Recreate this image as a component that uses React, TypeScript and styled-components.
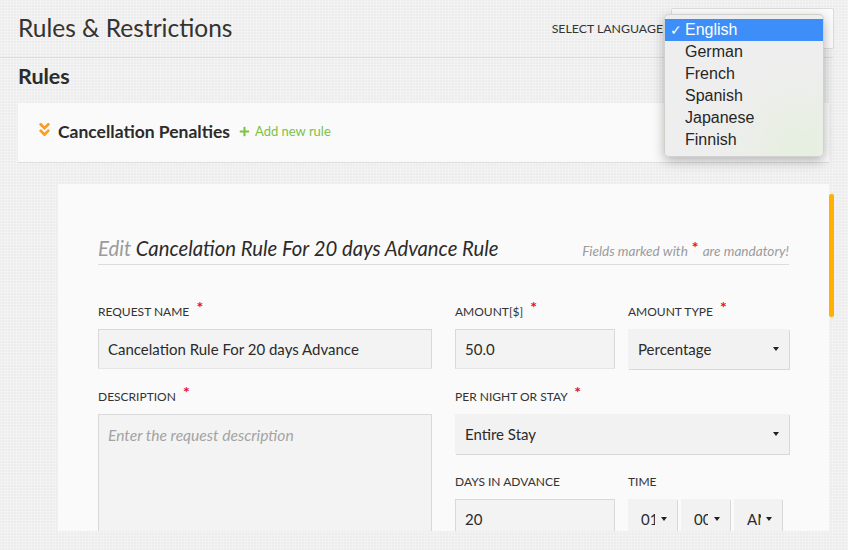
import React from 'react';
import styled, { createGlobalStyle } from 'styled-components';
import { FaAngleDoubleDown, FaPlus } from 'react-icons/fa';

const GlobalStyle = createGlobalStyle`
  html, body {
    margin: 0;
    padding: 0;
  }
  body {
    font-family: Lato, "Open Sans", sans-serif;
    color: #333;
    background-color: #efefef;
    background-image:
      radial-gradient(rgba(255, 255, 255, 0.45) 0.8px, transparent 1.1px),
      radial-gradient(rgba(0, 0, 0, 0.02) 0.8px, transparent 1.1px);
    background-size: 3px 3px;
    background-position: 0 0, 1.5px 1.5px;
  }
`;

const Page = styled.div`
  width: 848px;
  height: 550px;
  overflow: hidden;
`;

const Header = styled.header`
  height: 57px;
  margin-right: 15px;
  padding-left: 18px;
  display: flex;
  align-items: center;
  justify-content: space-between;
  border-bottom: 1px solid #dcdcdc;
`;

const Title = styled.h1`
  margin: 0 0 3px;
  font-size: 24.5px;
  font-weight: 400;
  color: #333;
`;

const LanguagePicker = styled.div`
  position: relative;
  display: flex;
  align-items: center;
  align-self: flex-start;
  margin-top: 8px;
  margin-right: -1px;
`;

const LanguageLabel = styled.span`
  font-size: 12.3px;
  text-transform: uppercase;
  color: #333;
  margin-right: 8px;
  margin-top: -1px;
`;

const LanguageBox = styled.div`
  width: 161px;
  height: 39px;
  background: #fbfbfb;
  border: 1px solid #dcdcdc;
  border-radius: 2px;
`;

const Menu = styled.ul`
  position: absolute;
  top: 6px;
  right: 10px;
  width: 160px;
  margin: 0;
  padding: 4px 0 5px;
  list-style: none;
  box-sizing: border-box;
  border-radius: 5px;
  border: 1px solid rgba(0, 0, 0, 0.12);
  background: radial-gradient(circle at 85% 95%, #e6efdf 0, #eeeeee 45%);
  box-shadow: 0 4px 12px rgba(0, 0, 0, 0.28);
  font-family: "Liberation Sans", Arial, sans-serif;
  font-size: 16px;
  z-index: 2;
`;

const MenuItem = styled.li<{ $active?: boolean }>`
  position: relative;
  height: 22px;
  line-height: 22px;
  padding-left: 20px;
  color: ${(p) => (p.$active ? '#fff' : '#262626')};
  background: ${(p) => (p.$active ? '#3d8ef8' : 'transparent')};
`;

const Check = styled.span`
  position: absolute;
  left: 5px;
  top: 0;
  font-size: 14px;
`;

const Content = styled.main`
  padding: 0 19px 0 18px;
`;

const SectionTitle = styled.h2`
  margin: 0;
  height: 45px;
  line-height: 36px;
  font-size: 21.5px;
  font-weight: 700;
  color: #2b2b2b;
`;

const RuleCard = styled.div`
  padding: 0 0 3px 18px;
  box-sizing: border-box;
  height: 60px;
  display: flex;
  align-items: center;
  background: #fafafa;
  border-bottom: 1px solid #dddddd;
`;

const Chevron = styled(FaAngleDoubleDown)`
  color: #ff9a1a;
  font-size: 17px;
  margin-right: 5px;
  margin-top: -3px;
`;

const CardTitle = styled.span`
  font-size: 17.5px;
  font-weight: 700;
  color: #2b2b2b;
  margin-right: 9px;
`;

const AddLink = styled.a`
  display: flex;
  align-items: center;
  gap: 5px;
  font-size: 13px;
  color: #7cc243;
  text-decoration: none;
  cursor: pointer;
`;

const ScrollArea = styled.div`
  position: relative;
  height: 347px;
  margin: 21px -5px 0 40px;
  overflow: hidden;
`;

const Thumb = styled.div`
  position: absolute;
  right: 0;
  top: 10px;
  width: 5px;
  height: 123px;
  border-radius: 2px;
  background: #ffb000;
`;

const Panel = styled.section`
  width: 771px;
  height: 100%;
  padding: 52px 40px 0;
  box-sizing: border-box;
  background: #fafafa;
`;

const EditHeading = styled.div`
  display: flex;
  align-items: baseline;
  justify-content: space-between;
  padding-bottom: 4px;
  border-bottom: 1px solid #dcdcdc;
`;

const EditTitle = styled.h3`
  margin: 0;
  font-size: 20.3px;
  font-weight: 400;
  font-style: italic;
  color: #2b2b2b;
`;

const Muted = styled.span`
  color: #9b9b9b;
`;

const Note = styled.span`
  font-size: 13.6px;
  font-style: italic;
  color: #9b9b9b;
`;

const Star = styled.span`
  color: #e8101c;
  font-style: normal;
  font-weight: 700;
  font-size: 16px;
  position: relative;
  top: -3px;
  margin: 0 4px 0 4px;
  line-height: 0;
`;

const FormGrid = styled.div`
  display: grid;
  grid-template-columns: 334px 334px;
  column-gap: 23px;
  margin-top: 38px;
`;

const Column = styled.div`
  display: flex;
  flex-direction: column;
  gap: 19px;
`;

const Pair = styled.div`
  display: grid;
  grid-template-columns: 160px 161px;
  column-gap: 13px;
`;

const Field = styled.div`
  display: flex;
  flex-direction: column;
`;

const Label = styled.label`
  height: 26px;
  font-size: 12px;
  text-transform: uppercase;
  color: #333;
  line-height: 18px;
`;

const Input = styled.div<{ $tall?: boolean; $placeholder?: boolean }>`
  height: ${(p) => (p.$tall ? '140px' : '40px')};
  box-sizing: border-box;
  padding: ${(p) => (p.$tall ? '11px 9px' : '0 9px')};
  display: flex;
  align-items: ${(p) => (p.$tall ? 'flex-start' : 'center')};
  background: #f3f3f3;
  border: 1px solid #d9d9d9;
  border-bottom-color: #e6e6e6;
  font-size: ${(p) => (p.$placeholder ? '15.6px' : '15px')};
  font-style: ${(p) => (p.$placeholder ? 'italic' : 'normal')};
  color: ${(p) => (p.$placeholder ? '#a3a3a3' : '#2b2b2b')};
`;

const Select = styled.div<{ $small?: boolean }>`
  height: 40px;
  box-sizing: border-box;
  padding: 0 10px 0 ${(p) => (p.$small ? '13px' : '10px')};
  display: flex;
  align-items: center;
  justify-content: space-between;
  background: #f2f2f2;
  box-shadow: 1px 1px 0 #d8d8d8;
  font-size: 15px;
  color: #2b2b2b;
`;

const Clip = styled.span`
  display: block;
  width: 14px;
  overflow: hidden;
  white-space: nowrap;
`;

const Caret = styled.span`
  flex-shrink: 0;
  width: 0;
  height: 0;
  border-left: 3.5px solid transparent;
  border-right: 3.5px solid transparent;
  border-top: 4px solid #222;
`;

const TimeRow = styled.div`
  display: grid;
  grid-template-columns: 49px 49px 48px;
  column-gap: 4px;
`;

const languages = ['English', 'German', 'French', 'Spanish', 'Japanese', 'Finnish'];

const Req = () => <Star>*</Star>;

export default function App() {
  return (
    <Page>
      <GlobalStyle />
      <Header>
        <Title>Rules &amp; Restrictions</Title>
        <LanguagePicker>
          <LanguageLabel>Select Language</LanguageLabel>
          <LanguageBox />
          <Menu>
            {languages.map((l, i) => (
              <MenuItem key={l} $active={i === 0}>
                {i === 0 && <Check>✓</Check>}
                {l}
              </MenuItem>
            ))}
          </Menu>
        </LanguagePicker>
      </Header>
      <Content>
        <SectionTitle>Rules</SectionTitle>
        <RuleCard>
          <Chevron />
          <CardTitle>Cancellation Penalties</CardTitle>
          <AddLink>
            <FaPlus size={11} />
            Add new rule
          </AddLink>
        </RuleCard>
        <ScrollArea>
          <Panel>
            <EditHeading>
              <EditTitle>
                <Muted>Edit</Muted> Cancelation Rule For 20 days Advance Rule
              </EditTitle>
              <Note>
                Fields marked with<Star>*</Star>are mandatory!
              </Note>
            </EditHeading>
            <FormGrid>
              <Column>
                <Field>
                  <Label>
                    Request Name <Req />
                  </Label>
                  <Input>Cancelation Rule For 20 days Advance</Input>
                </Field>
                <Field>
                  <Label>
                    Description <Req />
                  </Label>
                  <Input $tall $placeholder>
                    Enter the request description
                  </Input>
                </Field>
              </Column>
              <Column>
                <Pair>
                  <Field>
                    <Label>
                      Amount[$] <Req />
                    </Label>
                    <Input>50.0</Input>
                  </Field>
                  <Field>
                    <Label>
                      Amount Type <Req />
                    </Label>
                    <Select>
                      Percentage
                      <Caret />
                    </Select>
                  </Field>
                </Pair>
                <Field>
                  <Label>
                    Per Night or Stay <Req />
                  </Label>
                  <Select>
                    Entire Stay
                    <Caret />
                  </Select>
                </Field>
                <Pair>
                  <Field>
                    <Label>Days in Advance</Label>
                    <Input>20</Input>
                  </Field>
                  <Field>
                    <Label>Time</Label>
                    <TimeRow>
                      {['01', '00', 'AM'].map((t) => (
                        <Select key={t} $small>
                          <Clip>{t}</Clip>
                          <Caret />
                        </Select>
                      ))}
                    </TimeRow>
                  </Field>
                </Pair>
              </Column>
            </FormGrid>
          </Panel>
          <Thumb />
        </ScrollArea>
      </Content>
    </Page>
  );
}
